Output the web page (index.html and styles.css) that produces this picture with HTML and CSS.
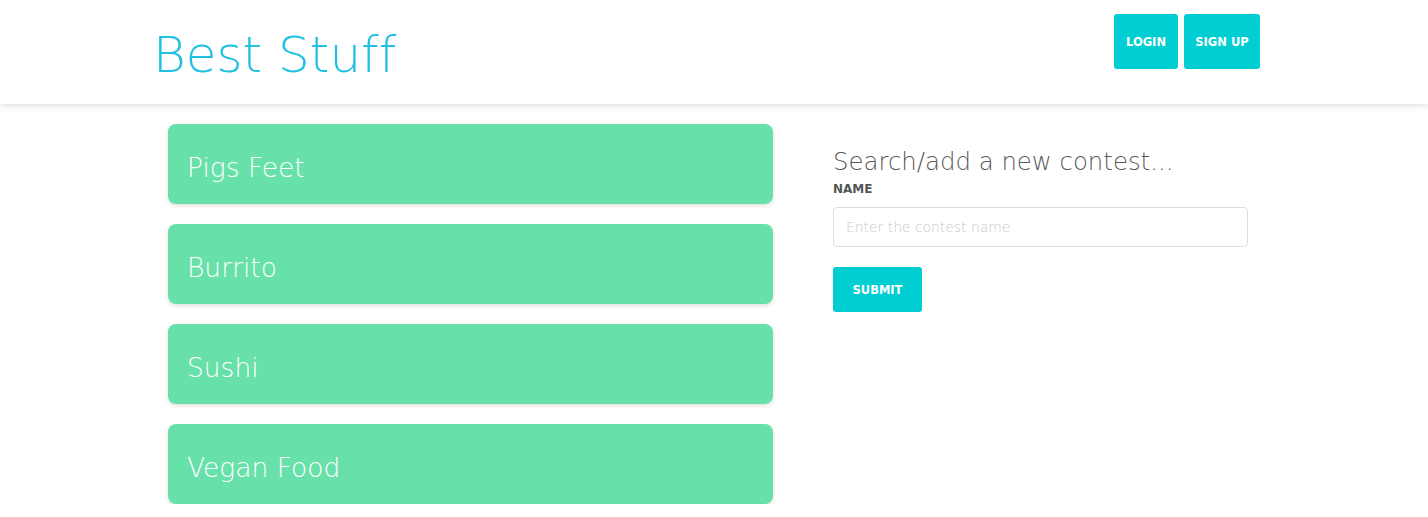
FILE: index.html
```html
<!DOCTYPE html>
<html>
<head>
<meta charset="utf-8">
<link rel="stylesheet" href="styles.css">
</head>
<body>
<header class="topbar">
  <div class="topbar-inner">
    <h1 class="brand">Best Stuff</h1>
    <nav class="auth">
      <button class="btn btn-nav">LOGIN</button>
      <button class="btn btn-nav btn-signup">SIGN UP</button>
    </nav>
  </div>
</header>
<main class="content">
  <section class="contest-list">
    <div class="card">Pigs Feet</div>
    <div class="card">Burrito</div>
    <div class="card">Sushi</div>
    <div class="card">Vegan Food</div>
  </section>
  <section class="contest-form">
    <h2 class="form-title">Search/add a new contest...</h2>
    <label class="field-label">NAME</label>
    <input class="field-input" type="text" placeholder="Enter the contest name">
    <button class="btn btn-submit">SUBMIT</button>
  </section>
</main>
</body>
</html>
```

FILE: styles.css
```css
* { box-sizing: border-box; }
html, body { margin: 0; padding: 0; background: #fff; }
body {
  font-family: "DejaVu Sans", "Open Sans", sans-serif;
  color: #555;
  font-variant-ligatures: none;
}

.topbar {
  height: 104px;
  background: #fff;
  box-shadow: 0 2px 6px rgba(0,0,0,0.12);
  position: relative;
  z-index: 1;
}
.topbar-inner {
  width: 1110px;
  margin: 0 auto;
  display: flex;
  justify-content: space-between;
  align-items: flex-start;
}
.brand {
  margin: 22px 0 0 -6px;
  font-size: 50px;
  font-weight: 200;
  color: #21c0e3;
  line-height: 66px;
  font-variant-ligatures: none;
}
.auth {
  display: flex;
  gap: 6px;
  margin: 14px 9px 0 0;
}
.btn {
  border: none;
  background: #00ced2;
  color: #fff;
  font-family: "DejaVu Sans", "Open Sans", sans-serif;
  font-weight: 700;
  font-size: 11.5px;
  border-radius: 3px;
  cursor: pointer;
  padding: 0;
}
.btn-nav { height: 55px; width: 64px; }
.btn-signup { width: 76px; }

.content {
  display: flex;
  padding: 20px 0 0 168px;
  gap: 60px;
}
.contest-list {
  width: 605px;
  display: flex;
  flex-direction: column;
  gap: 20px;
}
.card {
  height: 80px;
  background: #68e0aa;
  border-radius: 8px;
  box-shadow: 0 2px 4px rgba(0,0,0,0.12);
  color: #fff;
  font-size: 26.5px;
  font-weight: 200;
  padding: 6px 19px 0;
  display: flex;
  align-items: center;
}
.contest-form {
  width: 415px;
  display: flex;
  flex-direction: column;
  align-items: flex-start;
  padding-top: 20px;
}
.form-title {
  margin: 0;
  font-size: 24.4px;
  font-weight: 200;
  color: #5a5a5a;
  line-height: 36px;
}
.field-label {
  font-size: 12px;
  font-weight: 700;
  color: #555;
  margin-top: 1px;
  line-height: 16px;
}
.field-input {
  margin-top: 10px;
  width: 415px;
  height: 40px;
  border: 1px solid #ddd;
  border-radius: 4px;
  padding: 0 12px;
  font-family: "DejaVu Sans", "Open Sans", sans-serif;
  font-size: 13.9px;
  font-weight: 200;
  color: #555;
  outline: none;
}
.field-input::placeholder { color: #c8c8c8; }
.btn-submit {
  margin-top: 20px;
  width: 89px;
  height: 45px;
}
```
